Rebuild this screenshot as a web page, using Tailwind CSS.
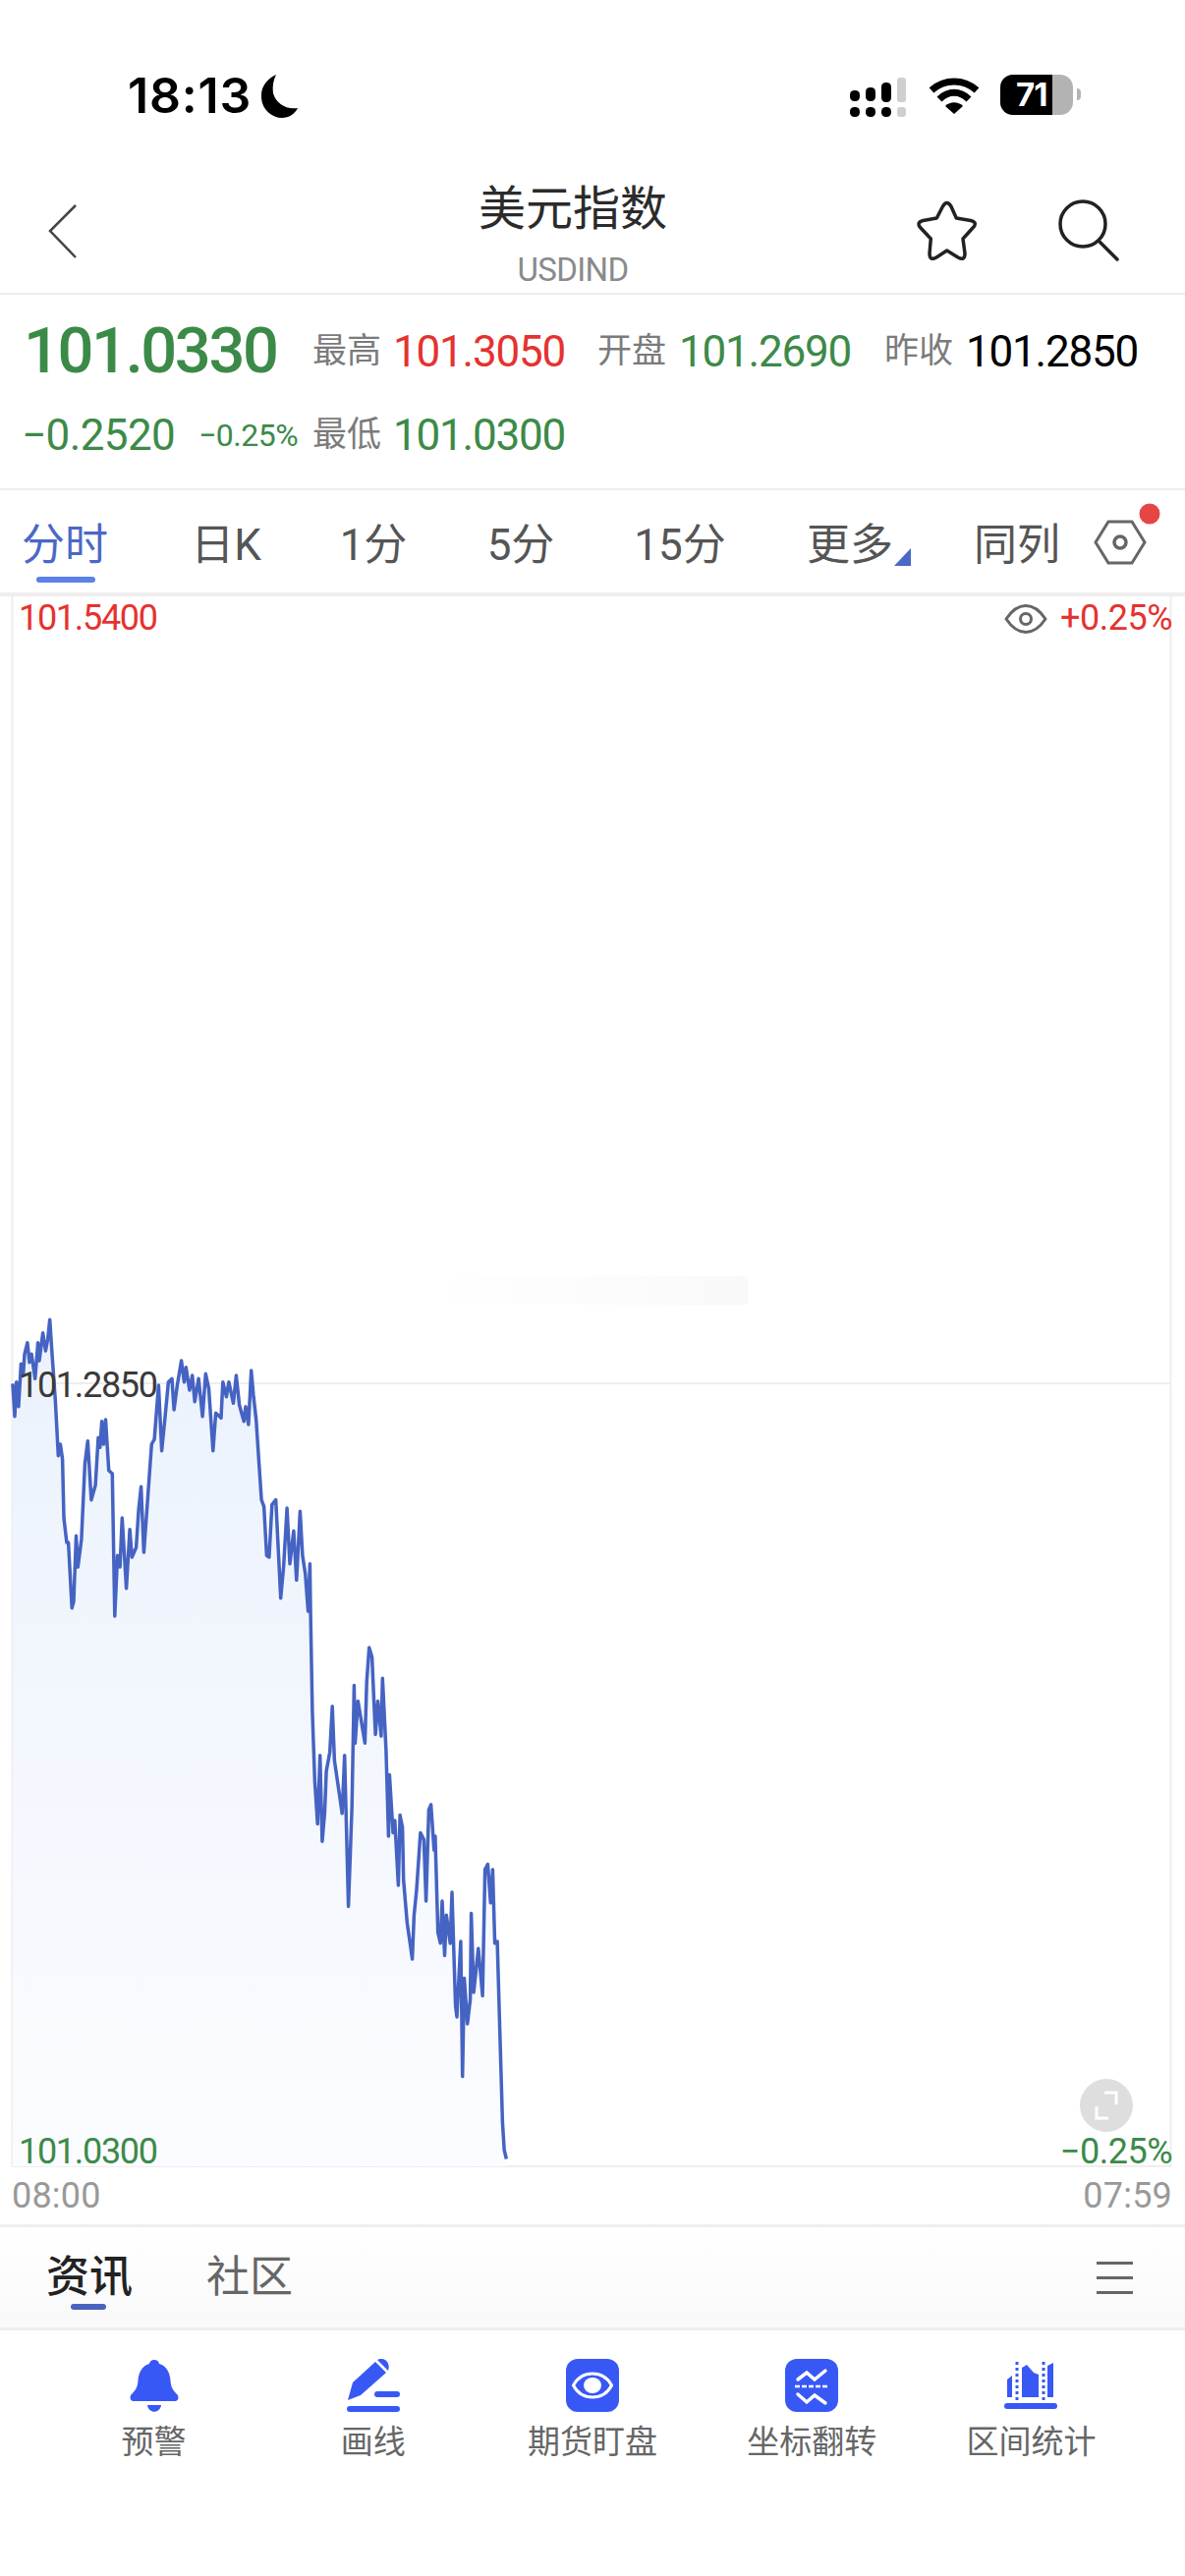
<!DOCTYPE html>
<html lang="en">
<head>
  <meta charset="UTF-8" />
  <meta name="viewport" content="width=device-width, initial-scale=1.0"/>
  <title>美元指数 - USDIND</title>
  <script src="https://cdn.jsdelivr.net/npm/@tailwindcss/browser@4"></script>
</head>
<body class="bg-white font-[Roboto,'Noto_Sans_CJK_SC',sans-serif] w-[1206px] h-[2622px] overflow-hidden">

  <!-- Status bar -->
  <div class="h-[170px] flex items-start pt-[74px] pl-[130px]">
    <span class="font-['Inter'] text-[50px] leading-[46px] font-semibold tracking-[0.8px] text-black">18:13</span>
    <svg class="ml-[8px] mt-[1px]" width="40" height="46" viewBox="0 0 40 46"><path d="M17 1C6 6 1 15 2 25c1 12 11 20 21 20 7 0 13-4 16-10-12 2-22-5-25-15C13 13 14 7 17 1Z" fill="#000"/></svg>
    <div class="ml-auto mr-[106px] flex items-start pt-[5px]">
      <svg width="60" height="42" viewBox="0 0 60 42">
        <rect x="0" y="13" width="10" height="11" rx="4.5"/><rect x="16" y="10" width="10" height="14" rx="4.5"/><rect x="32" y="5" width="10" height="20" rx="4.5"/><rect x="48" y="0" width="9" height="25" rx="3" fill="#cfcfcf"/>
        <rect x="0" y="30" width="10" height="10" rx="4.5"/><rect x="16" y="30" width="10" height="10" rx="4.5"/><rect x="32" y="30" width="10" height="10" rx="4.5"/><rect x="48" y="30" width="9" height="10" rx="3" fill="#cfcfcf"/>
      </svg>
      <svg class="ml-[21px]" width="50" height="38" viewBox="0 0 50 38">
        <path d="M2 13C15 1 35 1 48 13M10 22C19 13 31 13 40 22" fill="none" stroke="#000" stroke-width="7"/>
        <path d="M25 37l-9-8c5-5 13-5 18 0Z"/>
      </svg>
      <div class="ml-[22px] relative w-[74px] h-[41px] rounded-[13px] overflow-hidden bg-[#b3b3b3] -mt-[3px]">
        <div class="h-full w-[53px] bg-black"></div>
        <span class="absolute left-[16px] top-0 font-['Inter'] text-[33px] leading-[41px] font-bold text-white tracking-[-1px]">71</span>
      </div>
      <div class="w-[4px] h-[12px] mt-[11px] ml-[4px] bg-[#b3b3b3] rounded-r-full"></div>
    </div>
  </div>

  <!-- Title bar -->
  <header class="h-[130px] relative flex flex-col items-center pr-[40px] border-b-2 border-[#eeeeee]">
    <svg class="absolute left-[48px] top-[38px]" width="32" height="56" viewBox="0 0 32 56"><path d="M29 1 3 27l26 27" fill="none" stroke="#444" stroke-width="2.5"/></svg>
    <h1 class="text-[48px] leading-[60px] mt-[13px] text-[#2b2b2b] font-normal">美元指数</h1>
    <div class="text-[33px] leading-[38px] mt-[13px] text-[#8a8a8a] tracking-[-0.6px]">USDIND</div>
    <svg class="absolute left-[930px] top-[30px]" width="70" height="70" viewBox="0 0 70 70"><path d="M29.5 10Q33.7 3 37.9 10L43.3 22 58 24.5Q65.5 26.5 60 32L50 43 52 58Q52 66 45 62L33.7 55 23 62Q16 66 16 58L17.3 43 7 32Q2 26.5 9.5 24.5L23.3 22Z" fill="none" stroke="#222" stroke-width="3.5" stroke-linejoin="round"/></svg>
    <svg class="absolute left-[1070px] top-[30px]" width="75" height="70" viewBox="0 0 75 70"><circle cx="32" cy="28" r="23" fill="none" stroke="#222" stroke-width="3.5"/><path d="M49 46l18 18" stroke="#222" stroke-width="3.5" stroke-linecap="round"/></svg>
  </header>

  <!-- Quote -->
  <section class="h-[197px]">
    <div class="h-[116px] flex items-center">
      <span class="ml-[24px] w-[294px] text-[65px] font-medium text-[#3c8a48] tracking-[-2.4px]">101.0330</span>
      <span class="w-[82px] text-[35px] text-[#7b7b7b]">最高</span>
      <span class="w-[208px] text-[44px] text-[#e5322f] tracking-[-1.200px]">101.3050</span>
      <span class="w-[83px] text-[35px] text-[#7b7b7b]">开盘</span>
      <span class="w-[209px] text-[44px] text-[#3c8a48] tracking-[-1.200px]">101.2690</span>
      <span class="w-[83px] text-[35px] text-[#7b7b7b]">昨收</span>
      <span class="text-[44px] text-black tracking-[-1.200px]">101.2850</span>
    </div>
    <div class="h-[54px] flex items-center">
      <span class="ml-[22px] w-[180px] text-[44px] text-[#3c8a48] tracking-[-0.6px]">−0.2520</span>
      <span class="w-[116px] text-[32px] text-[#3c8a48] tracking-[-0.5px]">−0.25%</span>
      <span class="w-[82px] text-[35px] text-[#7b7b7b]">最低</span>
      <span class="text-[44px] text-[#3c8a48] tracking-[-1.200px]">101.0300</span>
    </div>
  </section>

  <!-- Period tabs -->
  <nav class="h-[110px] pt-[7px] border-t-2 border-b-4 border-[#eeeeee] flex items-center text-[44px] text-[#555555] relative">
    <div class="w-[132px] text-center relative text-[#4a68c6]">分时<span class="absolute left-[37px] top-[65px] w-[60px] h-[6px] rounded-full bg-[#5b80e6]"></span></div>
    <div class="w-[196px] text-center">日K</div>
    <div class="w-[104px] text-center">1分</div>
    <div class="w-[196px] text-center">5分</div>
    <div class="w-[128px] text-center">15分</div>
    <div class="w-[218px] text-center">更多</div>
    <div class="w-[122px] text-center">同列</div>
    <svg class="absolute left-[908px] top-[59px]" width="20" height="18" viewBox="0 0 20 18"><path d="M19 0v18H2Z" fill="#4a68c6"/></svg>
    <svg class="absolute left-[1110px] top-[8px]" width="76" height="72" viewBox="0 0 76 72">
      <path d="M5 45 18 24H42L55 45 42 66H18Z" fill="none" stroke="#666" stroke-width="3"/>
      <circle cx="30" cy="45" r="6" fill="none" stroke="#666" stroke-width="3.5"/>
      <circle cx="60" cy="16" r="10.5" fill="#e54545"/>
    </svg>
  </nav>

  <!-- Chart -->
  <section class="relative h-[1599px]">
    <svg class="absolute inset-0" width="1206" height="1599" viewBox="0 607 1206 1599">
      <defs>
        <linearGradient id="areaFill" gradientUnits="userSpaceOnUse" x1="0" y1="1340" x2="0" y2="2206">
          <stop offset="0" stop-color="#ebf2fc"/><stop offset="1" stop-color="#fbfcff"/>
        </linearGradient>
        <linearGradient id="smudge" x1="0" y1="0" x2="1" y2="0">
          <stop offset="0" stop-color="#ffffff"/><stop offset="1" stop-color="#f9f9f9"/>
        </linearGradient>
      </defs>
      <rect x="440" y="1299" width="321" height="29" fill="url(#smudge)"/>
      <path d="M12 1408H1192" stroke="#eeeeee" stroke-width="2"/>
      <path d="M12.5 607V2205H1191.5V607" fill="none" stroke="#eeeeee" stroke-width="2"/>
      <polygon id="priceArea" fill="url(#areaFill)"/>
      <polyline id="priceLine" fill="none" stroke="#4563c2" stroke-width="3.5" stroke-linejoin="round"/>
      <circle cx="1126" cy="2143" r="27" fill="#dedede"/>
      <path d="M1124 2130h12v12M1128 2156h-12v-12" fill="none" stroke="#fff" stroke-width="3"/>
      <circle cx="1044" cy="630" r="5.5" fill="none" stroke="#666" stroke-width="3"/>
      <path d="M1024 630C1036 612 1052 612 1064 630 1052 648 1036 648 1024 630Z" fill="none" stroke="#666" stroke-width="3" stroke-linejoin="round"/>
    </svg>
    <span class="absolute left-[19px] top-[2px] text-[36px] leading-[40px] text-[#e5322f] tracking-[-1.300px]">101.5400</span>
    <span class="absolute right-[13px] top-[2px] text-[36px] leading-[40px] text-[#e5322f] tracking-[-0.5px]">+0.25%</span>
    <span class="absolute left-[19px] top-[783px] text-[36px] leading-[40px] text-[#3a3a3a] tracking-[-1.300px]">101.2850</span>
    <span class="absolute left-[19px] -bottom-[4px] text-[36px] leading-[40px] text-[#3c8a48] tracking-[-1.300px]">101.0300</span>
    <span class="absolute right-[13px] -bottom-[4px] text-[36px] leading-[40px] text-[#3c8a48] tracking-[-0.5px]">−0.25%</span>
  </section>

  <!-- Time axis -->
  <div class="h-[58px] flex justify-between items-center pl-[12px] pr-[13px] text-[36px] text-[#999999] tracking-[0.2px]">
    <span>08:00</span><span>07:59</span>
  </div>

  <!-- News tabs -->
  <div class="h-[108px] border-y-[3px] border-[#eeeeee] bg-gradient-to-b from-white to-[#f9f9f9] flex items-center text-[44px] relative">
    <div class="ml-[47px] font-medium text-[#222222] relative">资讯<span class="absolute left-[25px] top-[60px] w-[36px] h-[6px] rounded-full bg-[#4a63bd]"></span></div>
    <div class="ml-[75px] text-[#666666]">社区</div>
    <div class="ml-auto mr-[53px] w-[37px] flex flex-col gap-[12px]">
      <span class="h-[3px] bg-[#666666]"></span><span class="h-[3px] bg-[#666666]"></span><span class="h-[3px] bg-[#666666]"></span>
    </div>
  </div>

  <!-- Tools -->
  <div class="grid grid-cols-5 px-[45px] pt-[29px] text-[33px] leading-[40px] text-[#666666] text-center">
    <div class="flex flex-col items-center gap-[11px]">
      <svg width="54" height="54" viewBox="-2 0 54 54" fill="#3858f6">
        <path d="M25 1a5 5 0 0 1 5 4C38 7 41 15 41.500 22 42 30 45 33 49 37 51 43 46 43 46 43H4C4 43-1 43 1 37 5 33 8 30 8.500 22 9 15 12 7 20 5a5 5 0 0 1 5-4Z"/>
        <path d="M18 47H32C31 56 19 56 18 47Z"/>
      </svg>
      <span>预警</span>
    </div>
    <div class="flex flex-col items-center gap-[11px]">
      <svg width="54" height="54" viewBox="0 0 54 54" fill="#3858f6">
        <path d="M29 3 40 14 14 37 1 42 6 24Z"/>
        <path d="M31 1C35-1 39 0 41 3 43 6 43 9 42 12Z"/>
        <rect x="28" y="33" width="26" height="6" rx="3"/>
        <rect x="0" y="48" width="54" height="6" rx="3"/>
      </svg>
      <span>画线</span>
    </div>
    <div class="flex flex-col items-center gap-[11px]">
      <svg width="54" height="54" viewBox="0 0 54 54">
        <rect width="54" height="54" rx="12" fill="#3858f6"/>
        <path d="M7.500 27C16 11 38 11 46.500 27 38 43 16 43 7.500 27Z" fill="none" stroke="#fff" stroke-width="3"/>
        <ellipse cx="27" cy="27" rx="9" ry="8" fill="#fff"/>
      </svg>
      <span>期货盯盘</span>
    </div>
    <div class="flex flex-col items-center gap-[11px]">
      <svg width="54" height="54" viewBox="0 0 54 54">
        <rect width="54" height="54" rx="12" fill="#3858f6"/>
        <path d="M13 21 22 14 30 21 41 12M13 36 22 44 30 37 41 45" fill="none" stroke="#fff" stroke-width="3.500" stroke-linecap="round"/>
        <path d="M10 28H44" stroke="#fff" stroke-width="2.500" stroke-dasharray="5 2"/>
      </svg>
      <span>坐标翻转</span>
    </div>
    <div class="flex flex-col items-center gap-[11px]">
      <svg width="54" height="54" viewBox="0 0 54 54" fill="#3858f6">
        <path d="M3 21 8 17V39H3ZM18 9 23 6 30 14 35 16V39H18ZM44 7 50 4V39H44Z"/>
        <path d="M13 3V42M40 3V42" stroke="#3858f6" stroke-width="3" stroke-dasharray="3 3"/>
        <rect x="0" y="45" width="54" height="6" rx="3"/>
      </svg>
      <span>区间统计</span>
    </div>
  </div>

  <script>
    // price samples as [x, y] pairs traced off the intraday line
    const upper = [36,325,42,425,47,320,53,395,60,265,66,300,70,235,78,200,84,260,90,235,100,310,108,200,112,255,122,170,130,225,136,190,142,130,148,230,152,290,158,380,166,545,172,510,178,555,182,735,190,810,195,810,205,1010,210,990,217,790,222,885,232,800,242,570,250,500,260,680,272,635,280,490,285,520,290,440,295,510,301,435,310,590,320,600,327,1035,335,850,342,885,348,735,360,950,370,770,376,855,388,825,395,710,402,640,410,840,420,690,432,510,440,495,452,330,461,530,470,430,480,320,490,310,496,405,505,330,517,255,525,320,530,275,540,345,548,300,555,380,566,310,577,425,586,295,595,340,607,530,615,415,630,430,635,320,645,365,652,320,665,385,673,300,682,390,695,440,700,395,708,450,716,285,722,360,730,435,737,550,745,680,752,700,760,850,767,855,775,695,786,680,800,980,808,885,818,705,826,875,837,775,845,925,855,715,862,850,870,905,878,1020,883,875,885,1030];
    const lower = [890,230,897,430,905,550,912,355,918,600,925,520,930,400,940,345,947,215,953,370,965,450,975,520,982,355,993,785,1003,500,1009,155,1012,320,1020,200,1030,260,1040,320,1045,145,1052,48,1060,75,1070,295,1077,200,1086,300,1090,135,1100,340,1107,585,1110,410,1120,575,1125,540,1135,725,1140,525,1147,560,1150,710,1160,830,1175,935,1180,810,1187,740,1198,575,1208,595,1214,770,1222,510,1228,495,1237,625,1240,585,1248,860,1255,890,1260,770,1267,925,1272,810,1283,890,1288,745,1298,1070,1302,1100,1313,885,1318,1270,1323,990,1332,1120,1340,1050,1343,805,1350,1030,1363,905,1375,1040,1382,680,1390,665,1398,775,1404,680,1410,890,1417,885,1425,1160,1432,1400,1437,1480,1443,1505];

    const pts = [];
    for (let i = 0; i < upper.length; i += 2) pts.push([upper[i] / 2.8, 1300 + upper[i + 1] / 3]);
    for (let i = 0; i < lower.length; i += 2) pts.push([lower[i] / 2.8, 1660 + lower[i + 1] / 2.8]);

    const line = pts.map(p => p[0].toFixed(1) + ',' + p[1].toFixed(1)).join(' ');
    document.getElementById('priceLine').setAttribute('points', line);
    document.getElementById('priceArea').setAttribute('points', line + ' ' + pts[pts.length - 1][0].toFixed(1) + ',2205 13,2205');
  </script>
</body>
</html>
